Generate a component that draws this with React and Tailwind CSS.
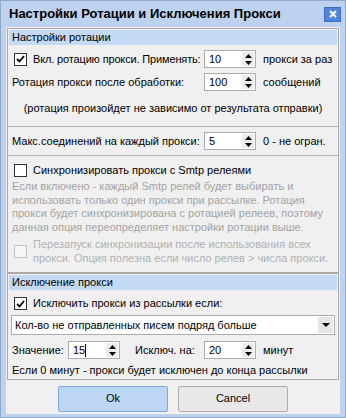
import React from 'react';

const Check = ({ checked, disabled }) => (
  <div
    className={`w-[13px] h-[13px] shrink-0 border flex items-center justify-center ${
      disabled ? 'border-[#c2c2c2] bg-[#f7f7f7]' : 'border-[#333333] bg-white'
    }`}
  >
    {checked && (
      <svg width="9" height="8" viewBox="0 0 9 8">
        <path d="M1 4 L3.5 6.5 L8 1" fill="none" stroke="#000" strokeWidth="1.8" />
      </svg>
    )}
  </div>
);

const Spin = ({ value, cursor }) => (
  <div className="w-[52px] h-[18px] bg-white border border-[#abadb3] flex shrink-0">
    <div className="flex-1 flex items-center pl-[4px] leading-none">
      {value}
      {cursor && <span className="w-px h-[13px] bg-black" />}
    </div>
    <div className="w-[12px] my-px mr-px bg-[#ececec] flex flex-col items-center justify-center gap-[3px]">
      <svg width="7" height="4" viewBox="0 0 7 4">
        <path d="M3.5 0 L7 4 L0 4z" fill="#000" />
      </svg>
      <svg width="7" height="4" viewBox="0 0 7 4">
        <path d="M0 0 L7 0 L3.5 4z" fill="#000" />
      </svg>
    </div>
  </div>
);

const Header = ({ children }) => (
  <div className="h-[15px] mx-px mt-px bg-[#c4d9f3] flex items-center px-[3px] leading-none">
    {children}
  </div>
);

export default function App() {
  return (
    <div className="w-[346px] h-[418px] bg-[#bcd2ee] border border-[#8ea8c8] flex flex-col font-['Liberation_Sans',sans-serif] text-[11px] text-black whitespace-nowrap">
      {/* title bar */}
      <div className="h-[26px] flex items-center justify-between pl-[8px] pr-[4px] shrink-0">
        <span className="font-bold text-[13px] text-black">Настройки Ротации и Исключения Прокси</span>
        <div className="w-[17px] h-[15px] bg-[#4f86dc] border border-[#3d6fc0] flex items-center justify-center">
          <svg width="8" height="8" viewBox="0 0 8 8">
            <path d="M1 1 L7 7 M7 1 L1 7" stroke="#fff" strokeWidth="2" />
          </svg>
        </div>
      </div>

      {/* body */}
      <div className="flex-1 mx-[5px] mb-[3px] bg-[#f0f0f0] flex flex-col px-px pt-px">
        {/* section 1 */}
        <div className="h-[245px] border border-[#a9a9a9] flex flex-col shrink-0">
          <Header>Настройки ротации</Header>

          <div className="flex items-center mt-[5px] h-[18px]">
            <div className="ml-[6px] mr-[6px]">
              <Check checked />
            </div>
            <span className="w-[171px] tracking-[-0.15px]">Вкл. ротацию прокси. Применять:</span>
            <Spin value="10" />
            <span className="ml-[7px]">прокси за раз</span>
          </div>

          <div className="flex items-center mt-[5px] h-[18px] pl-[4px]">
            <span className="w-[192px]">Ротация прокси после обработки:</span>
            <Spin value="100" />
            <span className="ml-[7px]">сообщений</span>
          </div>

          <div className="h-[35px] flex items-center justify-center">
            (ротация произойдет не зависимо от результата отправки)
          </div>

          <div className="h-[30px] border-t border-b border-[#b4b4b4] flex items-center pl-[4px]">
            <span className="w-[192px]">Макс.соединений на каждый прокси:</span>
            <Spin value="5" />
            <span className="ml-[7px]">0 - не огран.</span>
          </div>

          <div className="flex items-center h-[27px] pt-[1px]">
            <div className="ml-[6px] mr-[6px]">
              <Check />
            </div>
            <span>Синхронизировать прокси с Smtp релеями</span>
          </div>

          <div className="pl-[4px] pr-[4px] text-[#a3a3a3] leading-[13.5px] -mt-[3px]">
            Если включено - каждый Smtp релей будет выбирать и
            <br />
            использовать только один прокси при рассылке. Ротация
            <br />
            прокси будет синхронизирована с ротацией релеев, поэтому
            <br />
            данная опция переопределяет настройки ротации выше.
          </div>

          <div className="flex items-center mt-[3px]">
            <div className="ml-[6px] mr-[6px]">
              <Check disabled />
            </div>
            <span className="text-[#b0b0b0] leading-[14px]">
              Перезапуск синхронизации после использования всех
              <br />
              прокси. Опция полезна если число релев &gt; числа прокси.
            </span>
          </div>
        </div>

        {/* section 2 */}
        <div className="h-[107px] border border-[#a9a9a9] flex flex-col shrink-0">
          <Header>Исключение прокси</Header>

          <div className="flex items-center mt-[7px] h-[13px]">
            <div className="ml-[6px] mr-[6px]">
              <Check checked />
            </div>
            <span>Исключить прокси из рассылки если:</span>
          </div>

          <div className="mx-[3px] mt-[5px] h-[20px] bg-white border border-[#abadb3] flex items-center">
            <span className="flex-1 pl-[3px]">Кол-во не отправленных писем подряд больше</span>
            <div className="w-[15px] h-[16px] mr-px bg-[#e6e6e6] flex items-center justify-center">
              <svg width="8" height="4" viewBox="0 0 8 4">
                <path d="M0 0 L8 0 L4 4z" fill="#000" />
              </svg>
            </div>
          </div>

          <div className="flex items-center mt-[6px] h-[18px] pl-[4px]">
            <span className="w-[56px]">Значение:</span>
            <Spin value="15" cursor />
            <span className="ml-[15px] w-[69px]">Исключ. на:</span>
            <Spin value="20" />
            <span className="ml-[7px]">минут</span>
          </div>

          <div className="pl-[4px] mt-[3px] h-[16px] flex items-center">
            Если 0 минут - прокси будет исключен до конца рассылки
          </div>
        </div>

        {/* buttons */}
        <div className="flex-1 flex items-center justify-center gap-[10px] pt-[3px]">
          <button className="w-[110px] h-[26px] bg-[#bdd6f4] border border-[#7aa7dc] rounded-[2px]">
            Ok
          </button>
          <button className="w-[110px] h-[26px] bg-[#e8e8e8] border border-[#adadad] rounded-[2px]">
            Cancel
          </button>
        </div>
      </div>
    </div>
  );
}
